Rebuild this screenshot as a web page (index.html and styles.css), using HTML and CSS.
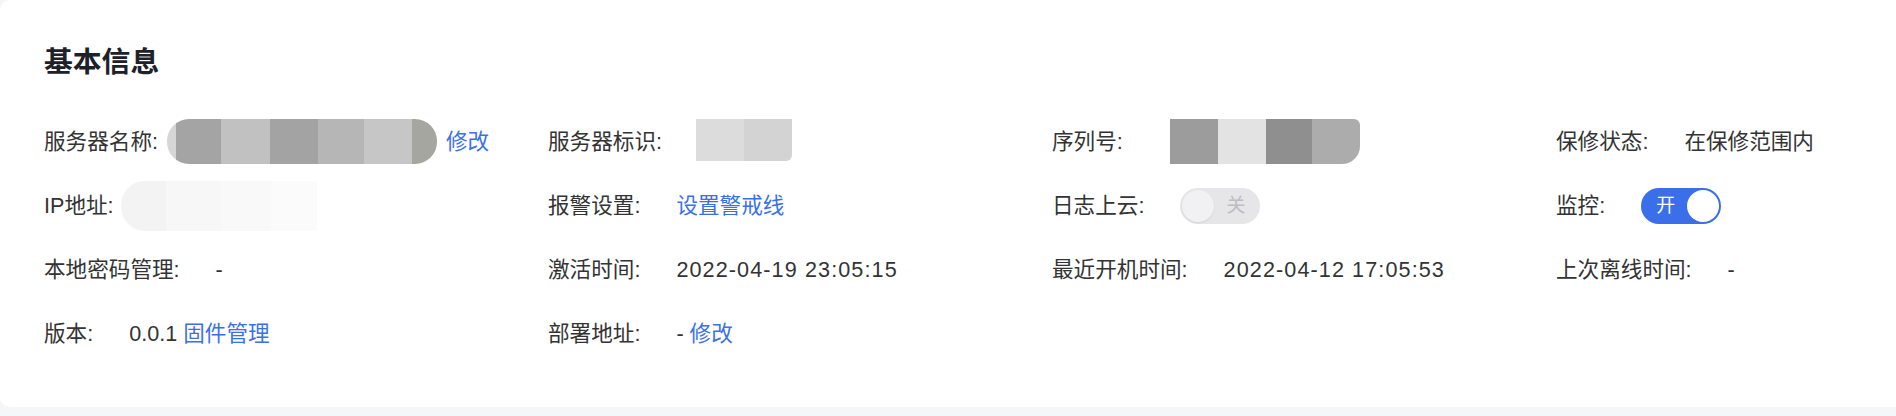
FILE: index.html
```html
<!DOCTYPE html>
<html lang="zh-CN">
<head>
  <meta charset="UTF-8"/>
  <meta name="viewport" content="width=device-width,initial-scale=1"/>
  <title>基本信息</title>
  <link rel="stylesheet" href="styles.css">
</head>
<body>

  <div class="card">
    <h2 class="card-title">基本信息</h2>

    <div class="info-grid">
      <!-- row 1 -->
      <div class="info-item">
        <span class="label">服务器名称:</span>
        <span class="mask mask-name"></span>
        <a href="#" class="link link-after-mask">修改</a>
      </div>
      <div class="info-item">
        <span class="label">服务器标识:</span>
        <span class="mask mask-id"></span>
      </div>
      <div class="info-item">
        <span class="label">序列号:</span>
        <span class="mask mask-sn"></span>
      </div>
      <div class="info-item">
        <span class="label">保修状态:</span>
        <span class="value">在保修范围内</span>
      </div>

      <!-- row 2 -->
      <div class="info-item">
        <span class="label">IP地址:</span>
        <span class="mask mask-ip"></span>
      </div>
      <div class="info-item">
        <span class="label">报警设置:</span>
        <a href="#" class="link">设置警戒线</a>
      </div>
      <div class="info-item">
        <span class="label">日志上云:</span>
        <span class="switch switch-off">
          <span class="knob"></span>
          <span class="switch-text">关</span>
        </span>
      </div>
      <div class="info-item">
        <span class="label">监控:</span>
        <span class="switch switch-on">
          <span class="switch-text">开</span>
          <span class="knob"></span>
        </span>
      </div>

      <!-- row 3 -->
      <div class="info-item">
        <span class="label">本地密码管理:</span>
        <span class="value">-</span>
      </div>
      <div class="info-item">
        <span class="label">激活时间:</span>
        <span class="value date">2022-04-19 23:05:15</span>
      </div>
      <div class="info-item">
        <span class="label">最近开机时间:</span>
        <span class="value date">2022-04-12 17:05:53</span>
      </div>
      <div class="info-item">
        <span class="label">上次离线时间:</span>
        <span class="value">-</span>
      </div>

      <!-- row 4 -->
      <div class="info-item">
        <span class="label">版本:</span>
        <span class="value">0.0.1 <a href="#" class="link">固件管理</a></span>
      </div>
      <div class="info-item">
        <span class="label">部署地址:</span>
        <span class="value">- <a href="#" class="link">修改</a></span>
      </div>
    </div>
  </div>

</body>
</html>
```

FILE: styles.css
```css
* { box-sizing: border-box; }

body {
  margin: 0;
  background: #f5f6f8;
  overflow: hidden;
  font-family: "Liberation Sans", "Noto Sans CJK SC", sans-serif;
  color: #333;
}

.card {
  background: #fff;
  border-radius: 10px;
  width: 2104px;
  padding: 42px 44px;
}

.card-title {
  margin: 0 0 27px;
  font-size: 28.8px;
  line-height: 40px;
  font-weight: 600;
  color: #1d2129;
}

.info-grid {
  display: grid;
  grid-template-columns: repeat(4, 1fr);
  grid-auto-rows: 64px;
}

.info-item {
  display: flex;
  align-items: center;
  font-size: 21.6px;
  line-height: 30px;
  padding-top: 1px;
  white-space: nowrap;
}

.label {
  margin-right: 36px;
  color: #333;
}

.value {
  color: #333;
}

.date {
  letter-spacing: 1.1px;
}

.link {
  color: #3a70ea;
  text-decoration: none;
}

.link-after-mask {
  margin-left: 9px;
}

/* blurred (hidden) values */
.mask {
  display: block;
  flex-shrink: 0;
}

.mask-name {
  width: 270px;
  height: 45px;
  margin-left: -27px;
  border-radius: 22px;
  background: linear-gradient(to right,
    #d6d6d6 0 9px, #a4a4a4 9px 54px, #c1c1c1 54px 103px, #a3a3a3 103px 151px,
    #b6b6b6 151px 197px, #c6c6c6 197px 245px, #a6a6a1 245px);
}

.mask-id {
  width: 96px;
  height: 42px;
  margin-top: -3px;
  margin-left: -2px;
  border-radius: 0 0 6px 0;
  background: linear-gradient(to right, #dcdcdc 0 48px, #d3d3d3 48px);
}

.mask-sn {
  width: 190px;
  height: 45px;
  margin-left: 11px;
  border-radius: 0 6px 18px 0;
  background: linear-gradient(to right,
    #9c9c9c 0 48px, #e3e3e3 48px 96px, #8f8f8f 96px 142px, #acacac 142px);
}

.mask-ip {
  width: 196px;
  height: 50px;
  margin-left: -29px;
  border-radius: 24px 0 0 24px;
  background: linear-gradient(to right,
    #f3f3f3 0 45px, #f7f7f7 45px 100px, #f9f9f9 100px 150px, #fbfbfb 150px);
}

/* switches */
.switch {
  display: inline-flex;
  align-items: center;
  width: 80px;
  height: 36px;
  padding: 2px;
  border-radius: 18px;
  font-size: 19px;
}

.knob {
  width: 32px;
  height: 32px;
  border-radius: 50%;
}

.switch-on {
  background: #3b6ee9;
  color: #fff;
  justify-content: space-between;
  padding-left: 15px;
}

.switch-on .knob {
  background: #fff;
}

.switch-off {
  background: #e6e6e9;
  color: #bdbdc2;
}

.switch-off .knob {
  background: #f1f1f3;
  box-shadow: 0 1px 2px rgba(0,0,0,0.08);
  margin-right: 12px;
}
```
